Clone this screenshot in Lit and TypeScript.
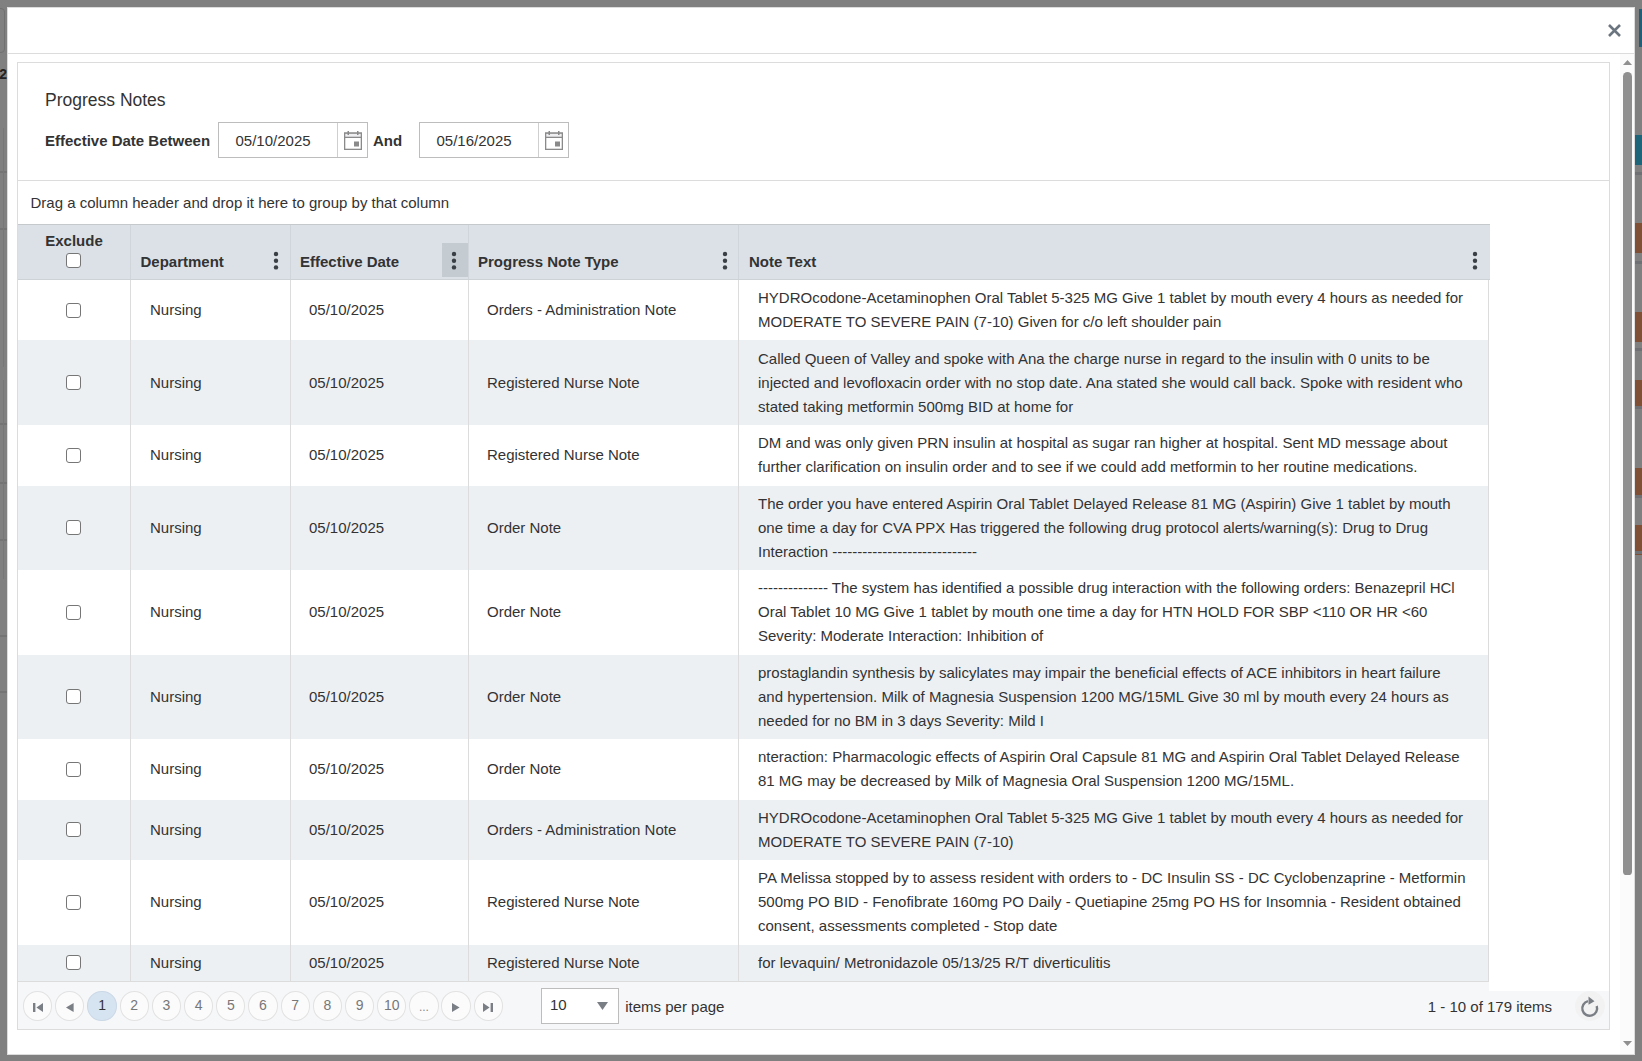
import { LitElement, html, css, svg } from "lit";
import { customElement } from "lit/decorators.js";

interface Row { type: string; lines: string[]; }

const ROWS: Row[] = [
  { type: "Orders - Administration Note", lines: [
    "HYDROcodone-Acetaminophen Oral Tablet 5-325 MG Give 1 tablet by mouth every 4 hours as needed for",
    "MODERATE TO SEVERE PAIN (7-10) Given for c/o left shoulder pain"] },
  { type: "Registered Nurse Note", lines: [
    "Called Queen of Valley and spoke with Ana the charge nurse in regard to the insulin with 0 units to be",
    "injected and levofloxacin order with no stop date. Ana stated she would call back. Spoke with resident who",
    "stated taking metformin 500mg BID at home for"] },
  { type: "Registered Nurse Note", lines: [
    "DM and was only given PRN insulin at hospital as sugar ran higher at hospital. Sent MD message about",
    "further clarification on insulin order and to see if we could add metformin to her routine medications."] },
  { type: "Order Note", lines: [
    "The order you have entered Aspirin Oral Tablet Delayed Release 81 MG (Aspirin) Give 1 tablet by mouth",
    "one time a day for CVA PPX Has triggered the following drug protocol alerts/warning(s): Drug to Drug",
    "Interaction -----------------------------"] },
  { type: "Order Note", lines: [
    "-------------- The system has identified a possible drug interaction with the following orders: Benazepril HCl",
    "Oral Tablet 10 MG Give 1 tablet by mouth one time a day for HTN HOLD FOR SBP <110 OR HR <60",
    "Severity: Moderate Interaction: Inhibition of"] },
  { type: "Order Note", lines: [
    "prostaglandin synthesis by salicylates may impair the beneficial effects of ACE inhibitors in heart failure",
    "and hypertension. Milk of Magnesia Suspension 1200 MG/15ML Give 30 ml by mouth every 24 hours as",
    "needed for no BM in 3 days Severity: Mild I"] },
  { type: "Order Note", lines: [
    "nteraction: Pharmacologic effects of Aspirin Oral Capsule 81 MG and Aspirin Oral Tablet Delayed Release",
    "81 MG may be decreased by Milk of Magnesia Oral Suspension 1200 MG/15ML."] },
  { type: "Orders - Administration Note", lines: [
    "HYDROcodone-Acetaminophen Oral Tablet 5-325 MG Give 1 tablet by mouth every 4 hours as needed for",
    "MODERATE TO SEVERE PAIN (7-10)"] },
  { type: "Registered Nurse Note", lines: [
    "PA Melissa stopped by to assess resident with orders to - DC Insulin SS - DC Cyclobenzaprine - Metformin",
    "500mg PO BID - Fenofibrate 160mg PO Daily - Quetiapine 25mg PO HS for Insomnia - Resident obtained",
    "consent, assessments completed - Stop date"] },
  { type: "Registered Nurse Note", lines: [
    "for levaquin/ Metronidazole 05/13/25 R/T diverticulitis"] },
];

const PIECES: [number, number, number, number, string][] = [
  [1639, 9, 3, 38, "#1f5f78"],
  [1635, 135, 7, 30, "#1f6579"],
  [1635, 172, 7, 3, "#6f7073"],
  [1635, 223, 7, 30, "#7f4f36"],
  [1635, 261, 7, 3, "#6f7073"],
  [1635, 312, 7, 30, "#7f4f36"],
  [1635, 348, 7, 3, "#6f7073"],
  [1635, 380, 7, 29, "#7f4f36"],
  [1635, 406, 7, 3, "#6f7073"],
  [1635, 468, 7, 29, "#7f4f36"],
  [1635, 495, 7, 3, "#6f7073"],
  [1635, 525, 7, 30, "#7f4f36"],
  [1635, 551, 7, 3, "#6f7073"],
  [0, 171, 7, 2, "#747474"],
  [0, 228, 7, 2, "#747474"],
  [0, 423, 7, 2, "#747474"],
  [0, 482, 7, 2, "#747474"],
  [0, 539, 7, 2, "#747474"],
  [0, 635, 7, 2, "#747474"],
  [0, 691, 7, 2, "#747474"],
  [3, 128, 1, 239, "#777777"],
  [3, 380, 1, 199, "#777777"],
];

const calendar = svg`<svg class="cal" viewBox="0 0 18 19" width="18" height="19" aria-hidden="true">
  <rect x="0.65" y="2.15" width="16.7" height="16.2" fill="#fff" stroke="#8a8a8a" stroke-width="1.3"/>
  <rect x="0.65" y="2.15" width="16.7" height="4.2" fill="#efeff2" stroke="#8a8a8a" stroke-width="1.3"/>
  <rect x="3.5" y="0" width="1.5" height="4" fill="#8a8a8a"/>
  <rect x="13" y="0" width="1.5" height="4" fill="#8a8a8a"/>
  <rect x="10" y="10.5" width="5" height="5" fill="#8a8a8a"/>
</svg>`;

const kebab = svg`<svg viewBox="0 0 26 34" width="26" height="34" aria-hidden="true">
  <circle cx="12" cy="11" r="2.2" fill="#3a3f45"/>
  <circle cx="12" cy="17.7" r="2.2" fill="#3a3f45"/>
  <circle cx="12" cy="24.4" r="2.2" fill="#3a3f45"/>
</svg>`;

const pagerIcon = (kind: string) => {
  const paths: Record<string, string> = {
    first: "M0 0h2.4v9H0z M10 0v9L3.4 4.5z",
    prev: "M7.6 0v9L0 4.5z",
    next: "M0 0v9l7.6-4.5z",
    last: "M7.6 0H10v9H7.6z M0 0v9l6.6-4.5z",
  };
  const w = kind === "first" || kind === "last" ? 10 : 8;
  return svg`<svg class="pi" viewBox="0 0 ${w} 9" width="${w}" height="9" aria-hidden="true"><path d="${paths[kind]}" fill="#7a7f85"/></svg>`;
};

@customElement("app-root")
export class AppRoot extends LitElement {
  static styles = css`
    :host {
      display: block;
      position: relative;
      width: 1642px;
      height: 1061px;
      overflow: hidden;
      background: #808080;
      font-family: "Liberation Sans", Arial, sans-serif;
      font-size: 15px;
      color: #333;
    }
    .piece { position: absolute; }
    .leftbox {
      position: absolute;
      left: -6px; top: 8px; width: 9px; height: 43px;
      border: 1px solid #707070; border-radius: 4px;
    }
    .leftnum {
      position: absolute;
      left: 0; top: 66px; width: 7px; overflow: hidden;
      font-weight: 700; font-size: 14px; line-height: 16px; direction: rtl; color: #222;
    }
    .modal {
      position: absolute;
      left: 7px; top: 7px;
      width: 1628px; height: 1048px;
      box-sizing: border-box;
      background: #fff;
      border: 1px solid #dcdcdc;
      display: flex;
      flex-direction: column;
    }
    .mhead {
      height: 46px;
      flex: none;
      box-sizing: border-box;
      border-bottom: 1px solid #dcdcdc;
      display: flex;
      align-items: center;
      justify-content: flex-end;
      padding-right: 13px;
    }
    .mbody {
      flex: 1;
      display: flex;
      min-height: 0;
    }
    .panel {
      margin: 8px 0 24px 9px;
      width: 1593px;
      box-sizing: border-box;
      border: 1px solid #dcdcdc;
      display: flex;
      flex-direction: column;
      flex: none;
    }
    .filters {
      height: 118px;
      flex: none;
      box-sizing: border-box;
      padding: 26px 0 0 27px;
      border-bottom: 1px solid #dcdcdc;
    }
    .title { font-size: 17.5px; line-height: 22px; margin-bottom: 11px; }
    .frow { display: flex; align-items: center; height: 36px; }
    .lbl { font-weight: 700; margin-top: 1px; }
    .frow .lbl:first-child { width: 173px; }
    .frow .and { width: 46px; padding-left: 5px; box-sizing: border-box; }
    .gap { width: 5px; flex: none; }
    .date {
      width: 150px; height: 36px;
      box-sizing: border-box;
      border: 1px solid #bdbdbd;
      display: flex;
      background: #fff;
    }
    .date .val { width: 118px; padding-left: 16.5px; box-sizing: border-box; line-height: 35px; }
    .date .btn {
      flex: 1;
      border-left: 1px solid #cfcfcf;
      display: flex; align-items: center; justify-content: center;
    }
    .drag {
      height: 43px; flex: none;
      box-sizing: border-box;
      padding-left: 12.5px;
      display: flex; align-items: center;
    }
    .grid { width: 1471px; flex: none; border-bottom: 1px solid #dcdcdc; }
    .row {
      display: grid;
      grid-template-columns: 113px 160px 178px 270px 750px;
    }
    .row.head {
      width: 1472px;
      grid-template-columns: 113px 160px 178px 270px 751px;
      height: 56px;
      box-sizing: border-box;
      background: #dbe1e7;
      border-top: 1px solid #c6c9cc;
      border-bottom: 1px solid #cdd2d7;
      font-weight: 700;
    }
    .row.alt { background: #edf0f3; }
    .c {
      box-sizing: border-box;
      border-right: 1px solid #dcdcdc;
      display: flex;
      align-items: center;
      padding-left: 18px;
      line-height: 24.1px;
    }
    .c.dept { padding-left: 19px; }
    .c.chk { padding: 0 2px 0 0; justify-content: center; }
    .c.note {
      padding: 6.15px 0 6.15px 19px;
      display: block;
      white-space: nowrap;
    }
    .head .c {
      align-items: flex-end;
      padding-left: 9px;
      border-right-color: #cfd5db;
    }
    .head .c:nth-child(2) { padding-left: 9.5px; }
    .head .c:nth-child(4) .kb { margin-right: -1px; }
    .head .c:last-child { padding-left: 10px; padding-right: 1px; border-right: none; }
    .head .lab { padding-bottom: 4.5px; }
    .head .c.ex {
      flex-direction: column;
      align-items: center;
      justify-content: flex-start;
      padding: 4px 2px 0 0;
    }
    .head .c.ex span { margin-left: 2px; }
    .kb {
      margin-left: auto;
      margin-bottom: 2px;
      width: 26px; height: 34px;
      flex: none;
      display: block;
    }
    .kb.on { background: #c4ccd2; }
    input[type="checkbox"] {
      appearance: none;
      margin: 0;
      display: block;
      width: 15px; height: 15px;
      box-sizing: border-box;
      background: #fff;
      border: 1.3px solid #767676;
      border-radius: 3px;
    }
    .foot {
      position: relative;
      flex: 1;
      box-sizing: border-box;
      padding-top: 1px;
      background: #f6f7f9;
      display: flex;
      align-items: center;
    }
    .notch {
      position: absolute;
      left: 1471px; right: 0; top: 0; height: 9px;
      background: #fff;
    }
    .pager { display: flex; gap: 2.9px; margin-left: 5px; }
    .pg {
      width: 29.3px; height: 29.5px;
      box-sizing: border-box;
      border: 1px solid #e2e2e2;
      border-radius: 50%;
      background: #fbfbfc;
      color: #777;
      font-size: 14px;
      display: flex; align-items: center; justify-content: center;
      padding-bottom: 2px;
    }
    .pg.ico { padding: 3px 0 0; }
    .pg.on { background: #d6e3f1; border-color: #cbd8e6; color: #333; }
    .pg.more { font-size: 12px; color: #8a8a8a; padding: 2px 0 0; }
    .size {
      margin: -1px 0 0 38px;
      width: 78px; height: 36px;
      box-sizing: border-box;
      background: #fff;
      border: 1px solid #bdbdbd;
      display: flex; align-items: center;
      justify-content: space-between;
      padding: 0 10px 3px 8px;
    }
    .tri { display: block; margin-top: 3px; }
    .ipp { margin-left: 6.3px; }
    .range { margin-left: auto; }
    .refresh {
      margin: 0 4px 0 23px;
      width: 30px; height: 30px;
      border-radius: 50%;
      background: #f2f2f2;
      flex: none;
      display: block;
    }
    .sb {
      margin-left: 10px;
      flex: 1;
      background: #fbfbfb;
      display: flex;
      flex-direction: column;
      align-items: center;
      padding: 6px 0 8px;
      box-sizing: border-box;
    }
    .sb .thumb {
      width: 9px; height: 803px;
      margin-top: 7px;
      background: #8f8f8f;
      border-radius: 5px 5px 4px 4px;
      flex: none;
    }
    .sb .sp { flex: 1; }
  `;

  private renderDate(v: string) {
    return html`<div class="date"><div class="val">${v}</div><div class="btn">${calendar}</div></div>`;
  }

  private renderHeadCell(label: string, on = false) {
    return html`<div class="c"><span class="lab">${label}</span><span class="kb ${on ? "on" : ""}">${kebab}</span></div>`;
  }

  render() {
    const nums = ["1", "2", "3", "4", "5", "6", "7", "8", "9", "10"];
    return html`
      ${PIECES.map(([x, y, w, h, c]) => html`<div class="piece" style="left:${x}px;top:${y}px;width:${w}px;height:${h}px;background:${c}"></div>`)}
      <div class="leftbox"></div>
      <div class="leftnum">2</div>
      <div class="modal">
        <div class="mhead">
          <svg viewBox="0 0 13 13" width="13" height="13" aria-label="Close">
            <path d="M1 1l11 11M12 1L1 12" stroke="#6b7580" stroke-width="2.6" fill="none"/>
          </svg>
        </div>
        <div class="mbody">
          <div class="panel">
            <div class="filters">
              <div class="title">Progress Notes</div>
              <div class="frow">
                <span class="lbl">Effective Date Between</span>
                ${this.renderDate("05/10/2025")}
                <span class="lbl and">And</span>
                <span class="gap"></span>
                ${this.renderDate("05/16/2025")}
              </div>
            </div>
            <div class="drag">Drag a column header and drop it here to group by that column</div>
            <div class="grid">
              <div class="row head">
                <div class="c ex"><span>Exclude</span><input type="checkbox" /></div>
                ${this.renderHeadCell("Department")}
                ${this.renderHeadCell("Effective Date", true)}
                ${this.renderHeadCell("Progress Note Type")}
                ${this.renderHeadCell("Note Text")}
              </div>
              ${ROWS.map((r, i) => html`
                <div class="row ${i % 2 ? "alt" : ""}">
                  <div class="c chk"><input type="checkbox" /></div>
                  <div class="c dept">Nursing</div>
                  <div class="c">05/10/2025</div>
                  <div class="c">${r.type}</div>
                  <div class="c note">${r.lines.map((l, j) => html`${j ? html`<br />` : ""}${l}`)}</div>
                </div>`)}
            </div>
            <div class="foot">
              <div class="notch"></div>
              <div class="pager">
                <div class="pg ico">${pagerIcon("first")}</div>
                <div class="pg ico">${pagerIcon("prev")}</div>
                ${nums.map((n, i) => html`<div class="pg ${i === 0 ? "on" : ""}">${n}</div>`)}
                <div class="pg more">...</div>
                <div class="pg ico">${pagerIcon("next")}</div>
                <div class="pg ico">${pagerIcon("last")}</div>
              </div>
              <div class="size">
                <span>10</span>
                <svg class="tri" viewBox="0 0 11 8" width="11" height="8" aria-hidden="true"><path d="M0 0h11L5.5 8z" fill="#7a7f85"/></svg>
              </div>
              <span class="ipp">items per page</span>
              <span class="range">1 - 10 of 179 items</span>
              <svg class="refresh" viewBox="0 0 30 30" aria-label="Refresh">
                <path d="M13 10.2A7.4 7.4 0 1 0 21.7 15" fill="none" stroke="#7a7f85" stroke-width="2.4"/>
                <path d="M13.5 5.5l6 4.8-6 3.4z" fill="#7a7f85"/>
              </svg>
            </div>
          </div>
          <div class="sb">
            <svg viewBox="0 0 9 5" width="9" height="5" aria-hidden="true"><path d="M4.5 0L9 5H0z" fill="#8f8f8f"/></svg>
            <div class="thumb"></div>
            <div class="sp"></div>
            <svg viewBox="0 0 9 5" width="9" height="5" aria-hidden="true"><path d="M0 0h9L4.5 5z" fill="#8f8f8f"/></svg>
          </div>
        </div>
      </div>
    `;
  }
}
